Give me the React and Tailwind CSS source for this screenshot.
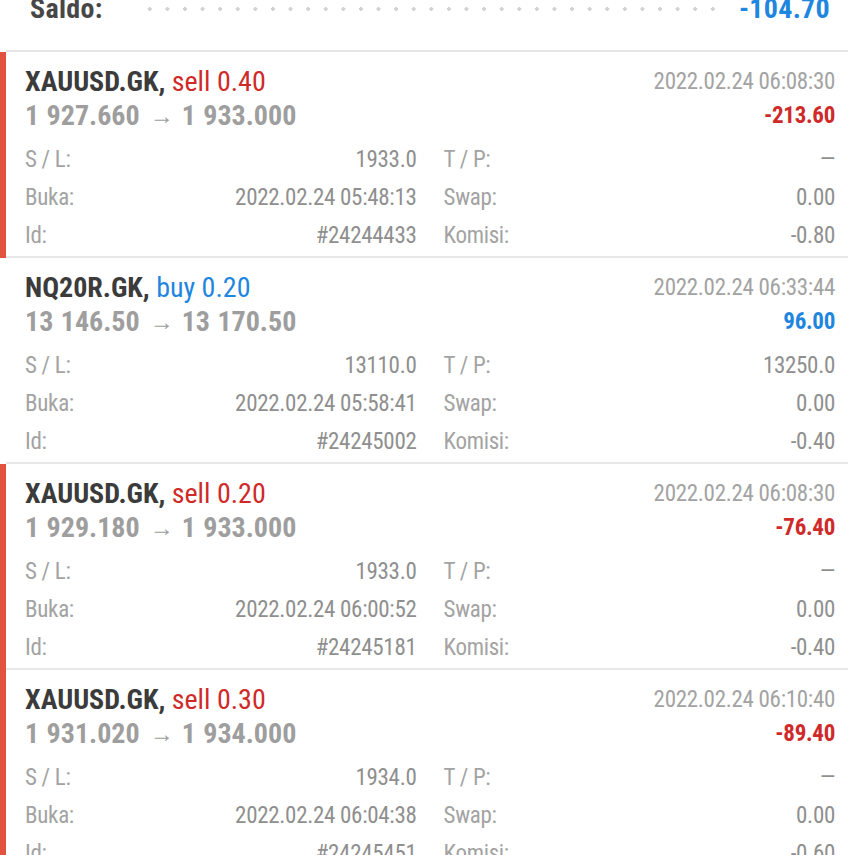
import React from 'react';

const trades = [
  {
    symbol: 'XAUUSD.GK', type: 'sell', lots: '0.40',
    open: '1 927.660', close: '1 933.000', time: '2022.02.24 06:08:30', profit: '-213.60',
    sl: '1933.0', tp: '—', opened: '2022.02.24 05:48:13', swap: '0.00', id: '#24244433', fee: '-0.80',
  },
  {
    symbol: 'NQ20R.GK', type: 'buy', lots: '0.20',
    open: '13 146.50', close: '13 170.50', time: '2022.02.24 06:33:44', profit: '96.00',
    sl: '13110.0', tp: '13250.0', opened: '2022.02.24 05:58:41', swap: '0.00', id: '#24245002', fee: '-0.40',
  },
  {
    symbol: 'XAUUSD.GK', type: 'sell', lots: '0.20',
    open: '1 929.180', close: '1 933.000', time: '2022.02.24 06:08:30', profit: '-76.40',
    sl: '1933.0', tp: '—', opened: '2022.02.24 06:00:52', swap: '0.00', id: '#24245181', fee: '-0.40',
  },
  {
    symbol: 'XAUUSD.GK', type: 'sell', lots: '0.30',
    open: '1 931.020', close: '1 934.000', time: '2022.02.24 06:10:40', profit: '-89.40',
    sl: '1934.0', tp: '—', opened: '2022.02.24 06:04:38', swap: '0.00', id: '#24245451', fee: '-0.60',
  },
];

const Field = ({ label, value }) => (
  <div className="flex justify-between items-center h-[38px]">
    <span className="text-[#a3a3a3]">{label}</span>
    <span className="text-[#8f8f8f]">{value}</span>
  </div>
);

const TradeCard = ({ t }) => {
  const isSell = t.type === 'sell';
  return (
    <div className="flex">
      <div className={`w-[6px] shrink-0 ${isSell ? 'bg-[#e2533f]' : 'bg-white'}`} />
      <div className="flex-1 border-b-2 border-[#e8e8e8] pl-[19px] pr-[13px] pt-[13px] pb-[1px]">
        <div className="flex justify-between items-center h-[34px]">
          <div className="text-[28px]">
            <span className="font-bold text-[#3b3b3b]">{t.symbol},</span>{' '}
            <span className={isSell ? 'text-[#cf2a2a]' : 'text-[#1f86e0]'}>{t.type} {t.lots}</span>
          </div>
          <div className="text-[23px] tracking-[-0.3px] text-[#a3a3a3]">{t.time}</div>
        </div>
        <div className="flex justify-between items-center h-[34px]">
          <div className="flex items-center text-[28px] font-bold text-[#9e9e9e] [word-spacing:1px]">
            <span>{t.open}</span>
            <span className="ml-[10px] mr-[8px] text-[24px] font-normal">→</span>
            <span>{t.close}</span>
          </div>
          <div className={`text-[23px] font-bold tracking-[-0.3px] ${isSell ? 'text-[#cf2a2a]' : 'text-[#1f86e0]'}`}>
            {t.profit}
          </div>
        </div>
        <div className="grid grid-cols-2 gap-x-[27px] mt-[8px] text-[23px] tracking-[-0.3px]">
          <Field label="S / L:" value={t.sl} />
          <Field label="T / P:" value={t.tp} />
          <Field label="Buka:" value={t.opened} />
          <Field label="Swap:" value={t.swap} />
          <Field label="Id:" value={t.id} />
          <Field label="Komisi:" value={t.fee} />
        </div>
      </div>
    </div>
  );
};

export default function App() {
  return (
    <div className="w-[848px] h-[855px] overflow-hidden bg-white font-['Roboto_Condensed',Roboto,sans-serif]">
      <div className="flex items-center h-[34px] -mt-[8px] pl-[30px] pr-[18px]">
        <span className="text-[28px] font-bold text-[#474747] tracking-[0.3px]">Saldo:</span>
        <div className="flex-1 h-[6px] ml-[38px] mr-[20px] bg-[radial-gradient(circle,#d2d2d2_1.6px,transparent_1.9px)] bg-[length:17.6px_6px]" />
        <span className="text-[28px] font-bold text-[#1f86e0] tracking-[0.3px]">-104.70</span>
      </div>
      <div className="h-[24px]" />
      <div className="ml-[6px] h-[2px] bg-[#e6e6e6]" />
      {trades.map((t, i) => (
        <TradeCard key={i} t={t} />
      ))}
    </div>
  );
}
